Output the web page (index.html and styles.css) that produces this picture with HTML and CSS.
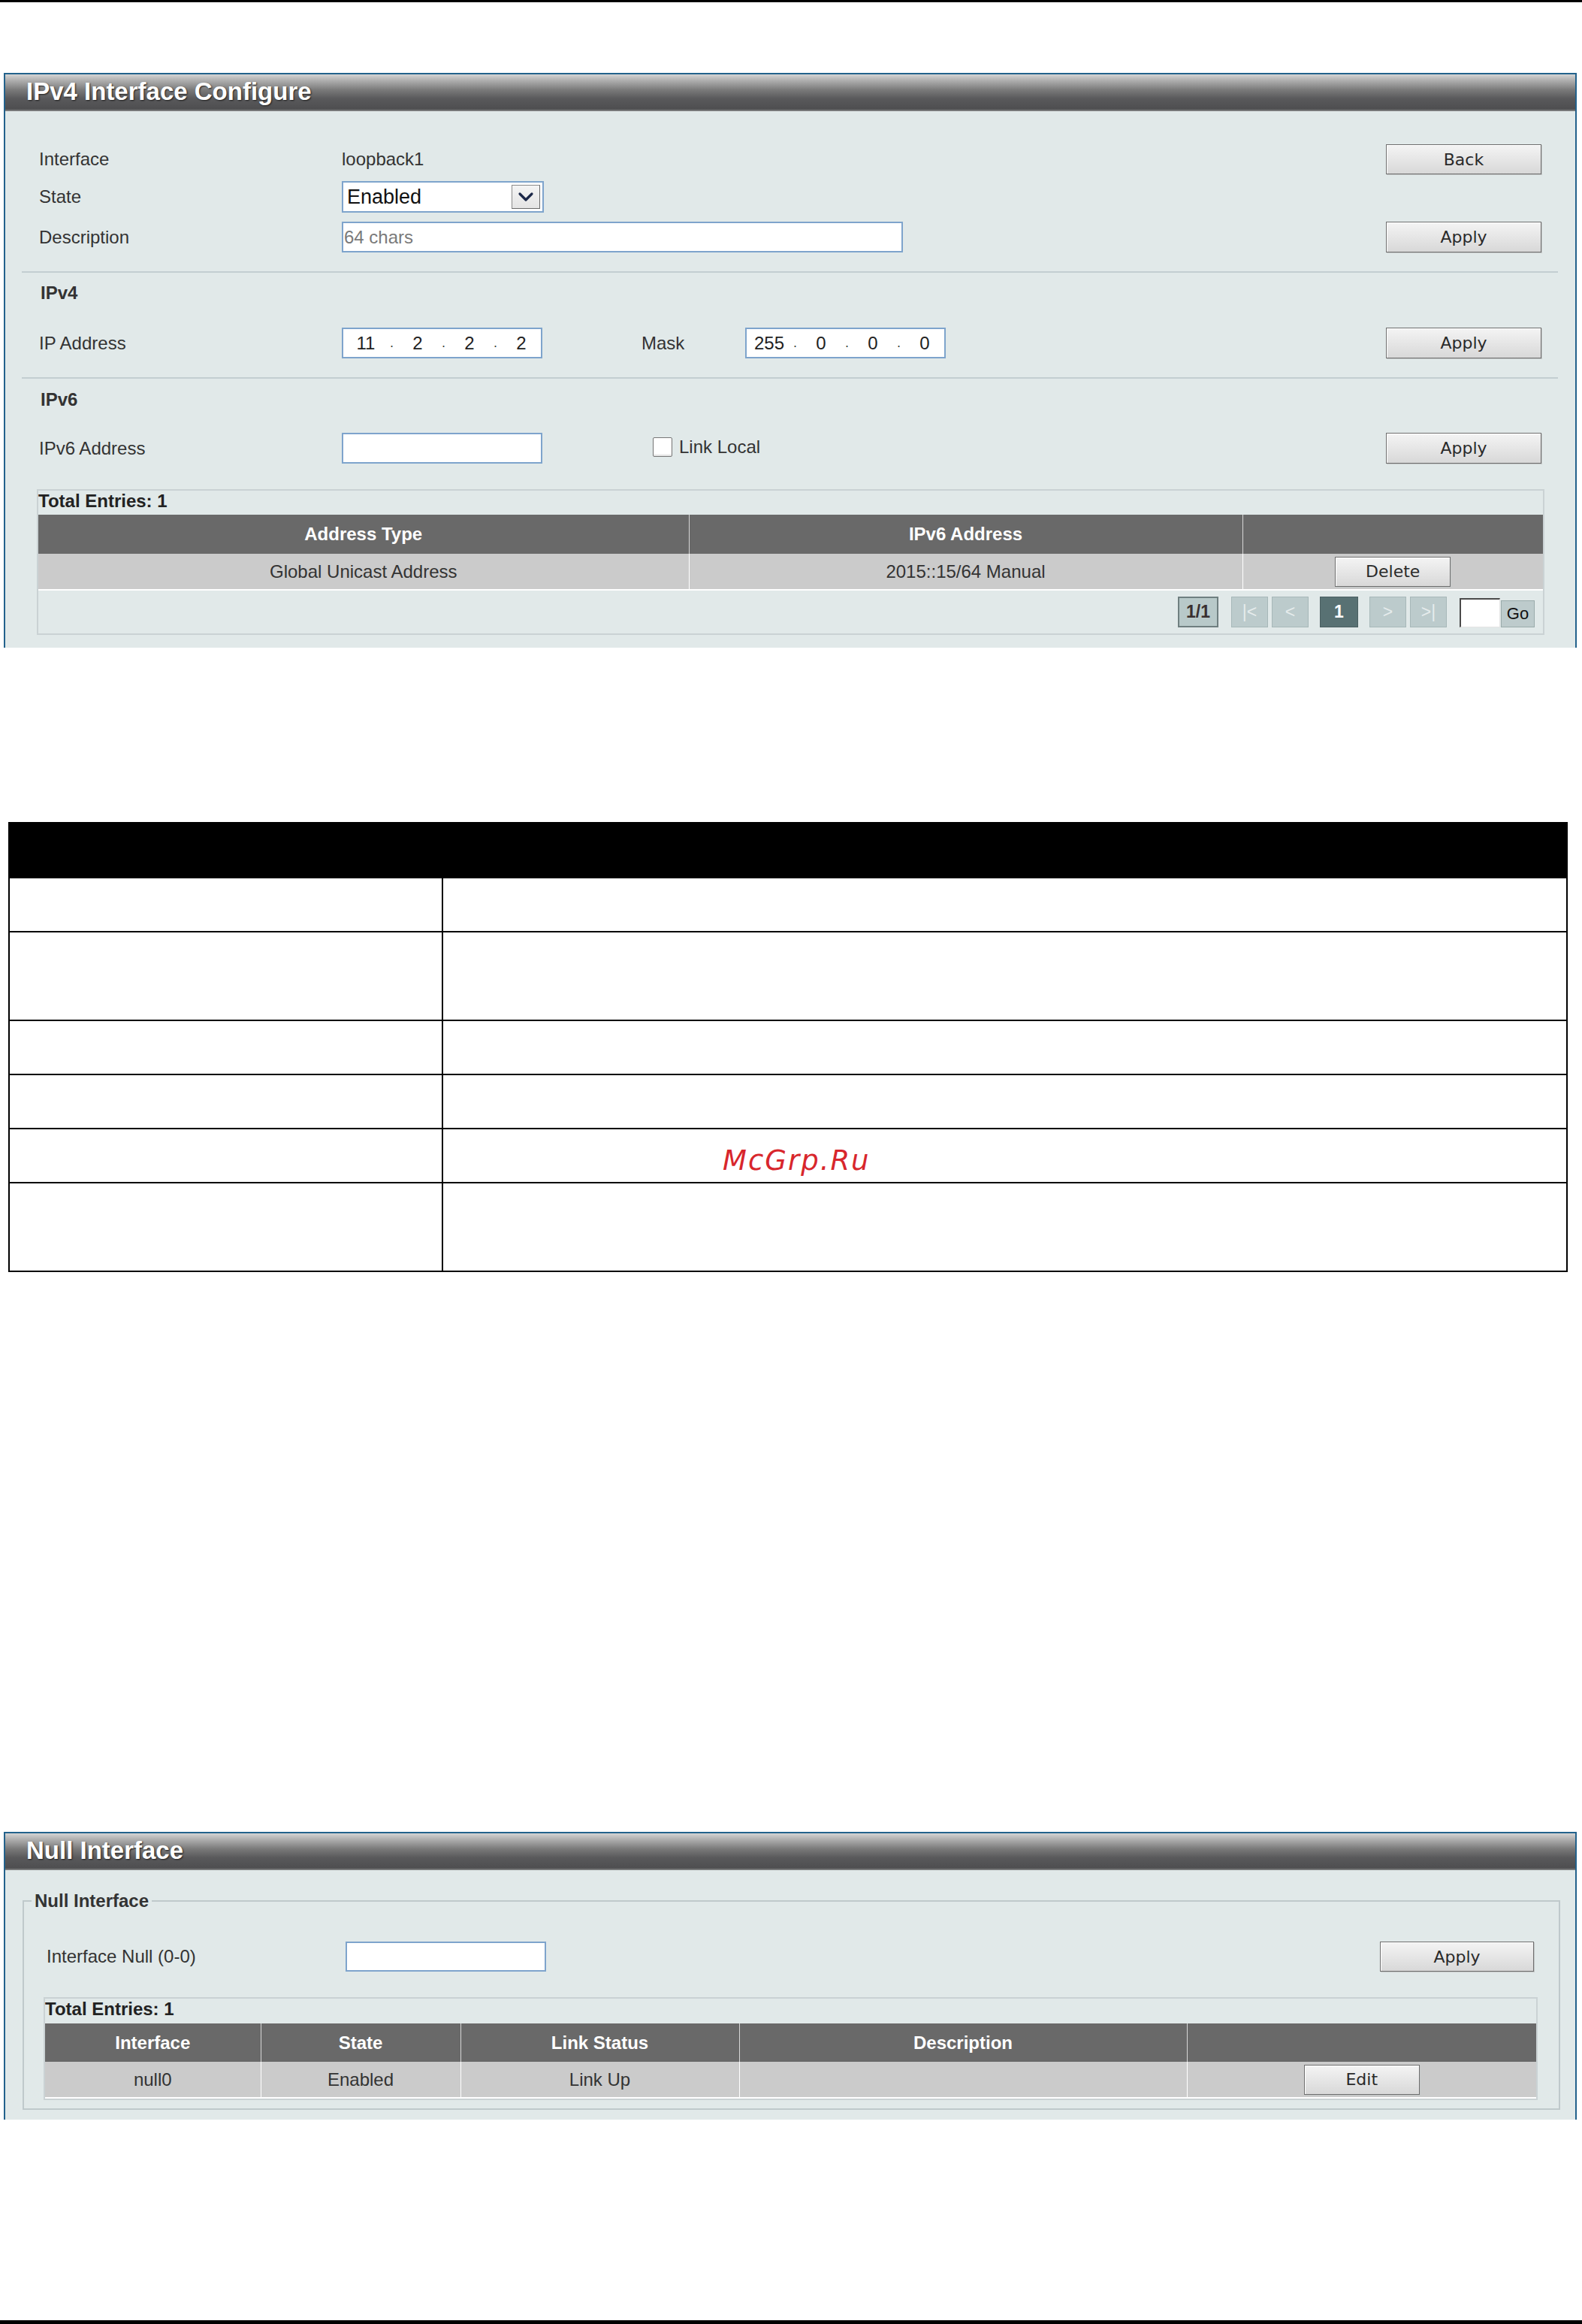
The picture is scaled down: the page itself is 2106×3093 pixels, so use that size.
FILE: index.html
```html
<!DOCTYPE html>
<html lang="en">
<head>
<meta charset="utf-8">
<title>IPv4 Interface Configure</title>
<link rel="stylesheet" href="styles.css">
</head>
<body>
<div class="topline"></div>

<section class="panel">
  <div class="ptitle">IPv4 Interface Configure</div>
  <div class="pbody">
    <div class="frow r1">
      <span class="lbl">Interface</span>
      <span class="val">loopback1</span>
      <button class="btn">Back</button>
    </div>
    <div class="frow r2">
      <span class="lbl">State</span>
      <div class="select">
        <span class="seltext">Enabled</span>
        <span class="arrow"><svg width="36" height="30" viewBox="0 0 36 30"><path d="M10 11 L18 19 L26 11" fill="none" stroke="#1b2748" stroke-width="3.2" stroke-linecap="round" stroke-linejoin="round"/></svg></span>
      </div>
    </div>
    <div class="frow r3">
      <span class="lbl">Description</span>
      <div class="inp desc">64 chars</div>
      <button class="btn">Apply</button>
    </div>
    <div class="sep"></div>
    <div class="subhead">IPv4</div>
    <div class="frow r4">
      <span class="lbl">IP Address</span>
      <div class="inp ip"><span class="oct">11</span><span class="dot">.</span><span class="oct">2</span><span class="dot">.</span><span class="oct">2</span><span class="dot">.</span><span class="oct">2</span></div>
      <span class="lbl2">Mask</span>
      <div class="inp ip"><span class="oct">255</span><span class="dot">.</span><span class="oct">0</span><span class="dot">.</span><span class="oct">0</span><span class="dot">.</span><span class="oct">0</span></div>
      <button class="btn">Apply</button>
    </div>
    <div class="sep sep2"></div>
    <div class="subhead sub2">IPv6</div>
    <div class="frow r5">
      <span class="lbl">IPv6 Address</span>
      <div class="inp ip6"></div>
      <span class="chk"><span class="cbox"></span><span>Link Local</span></span>
      <button class="btn">Apply</button>
    </div>
    <div class="tbox">
      <div class="total">Total Entries: 1</div>
      <table class="dt">
        <colgroup><col class="a1"><col class="a2"><col></colgroup>
        <thead><tr><th>Address Type</th><th>IPv6 Address</th><th></th></tr></thead>
        <tbody><tr><td>Global Unicast Address</td><td>2015::15/64 Manual</td><td><button class="btn sbtn">Delete</button></td></tr></tbody>
      </table>
      <div class="pager">
        <span class="pg cur">1/1</span>
        <span class="pg dis g17">|&lt;</span>
        <span class="pg dis g5">&lt;</span>
        <span class="pg act g15">1</span>
        <span class="pg dis g15">&gt;</span>
        <span class="pg dis g5">&gt;|</span>
        <span class="pgin g17"></span>
        <span class="pg go">Go</span>
      </div>
    </div>
  </div>
</section>

<table class="bt">
  <colgroup><col class="bc1"><col></colgroup>
  <tr class="bh"><td></td><td></td></tr>
  <tr class="s"><td></td><td></td></tr>
  <tr class="t"><td></td><td></td></tr>
  <tr class="s"><td></td><td></td></tr>
  <tr class="s"><td></td><td></td></tr>
  <tr class="s"><td></td><td class="wmcell"><div class="wm">McGrp.Ru</div></td></tr>
  <tr class="t"><td></td><td></td></tr>
</table>

<section class="panel panel2">
  <div class="ptitle">Null Interface</div>
  <div class="pbody pbody2">
    <fieldset class="fs">
      <legend>Null Interface</legend>
      <div class="frow nrow">
        <span class="lbl nl">Interface Null (0-0)</span>
        <div class="inp nin"></div>
        <button class="btn nbtn">Apply</button>
      </div>
      <div class="tbox ntbox">
        <div class="total">Total Entries: 1</div>
        <table class="dt">
          <colgroup><col class="n1"><col class="n2"><col class="n3"><col class="n4"><col></colgroup>
          <thead><tr><th>Interface</th><th>State</th><th>Link Status</th><th>Description</th><th></th></tr></thead>
          <tbody><tr><td>null0</td><td>Enabled</td><td>Link Up</td><td></td><td><button class="btn sbtn">Edit</button></td></tr></tbody>
        </table>
      </div>
    </fieldset>
  </div>
</section>

<div class="botline"></div>
</body>
</html>
```

FILE: styles.css
```css
* { box-sizing: border-box; }
html, body { margin: 0; padding: 0; background: #fff; }
body {
  width: 2106px;
  height: 3093px;
  overflow: hidden;
  font-family: "Liberation Sans", Arial, sans-serif;
  font-size: 24px;
  color: #333;
}

.topline { height: 3px; background: #000; }
.botline { height: 5px; background: #000; margin-top: 267px; }

/* panels */
.panel {
  margin: 94px 0 0 5px;
  width: 2094px;
  border: 2px solid #23628c;
  border-bottom: 0;
  background: #e1e9e9;
}
.panel2 { margin-top: 745px; }
.ptitle {
  height: 49px;
  line-height: 45px;
  padding-left: 28px;
  font-size: 33px;
  font-weight: bold;
  color: #fff;
  text-shadow: 1px 1px 2px #1e1e1e;
  background: linear-gradient(#d4d4d4 0%, #b0b0b0 16%, #7a7a7a 42%, #59595b 66%, #4e4e50 94%, #8c8e8e 100%);
}
.pbody { padding: 44px 45px 17px; }

.frow { display: flex; align-items: center; }
.lbl { width: 403px; flex: none; }
.val { color: #333; }
.r1 { height: 40px; }
.r2 { height: 42px; margin-top: 9px; }
.r3 { height: 41px; margin-top: 12px; }
.r4 { height: 41px; margin-top: 26px; }
.r5 { height: 41px; margin-top: 24px; }

.btn {
  margin-left: auto;
  width: 207px;
  height: 41px;
  padding: 0;
  font-family: "DejaVu Sans", Tahoma, sans-serif;
  font-size: 22px;
  color: #2a2a2a;
  background: linear-gradient(#f4f4f4, #e6e6e6 50%, #d8d8d8);
  border: 1px solid #6e6e6e;
  box-shadow: inset 1px 1px 0 #fff, 1px 1px 0 #c4c8c8;
}
.r1 .btn { height: 40px; }

.select {
  width: 269px;
  height: 42px;
  border: 2px solid #7ea4cc;
  background: #fff;
  display: flex;
  align-items: center;
  padding: 0 3px 0 5px;
}
.seltext { font-size: 27px; color: #111; flex: 1; }
.arrow {
  width: 38px;
  height: 32px;
  display: flex;
  align-items: center;
  justify-content: center;
  background: linear-gradient(#f4f4f4, #e4e4e4);
  border: 1px solid #8a8a8a;
  border-right-color: #6a6a6a;
  border-bottom-color: #6a6a6a;
}

.inp {
  height: 41px;
  border: 2px solid #7ea4cc;
  background: #fff;
}
.desc {
  width: 747px;
  color: #7a7a7a;
  line-height: 37px;
  padding-left: 1px;
}
.ip {
  width: 267px;
  display: flex;
  align-items: center;
  overflow: visible;
}
.oct { width: 60px; flex: none; text-align: center; color: #222; }
.dot { width: 9px; flex: none; text-align: center; font-size: 18px; color: #444; }
.lbl2 { margin-left: 132px; width: 138px; flex: none; }
.ip6 { width: 267px; }

.chk { display: flex; align-items: center; margin-left: 147px; margin-top: -4px; }
.cbox {
  width: 26px;
  height: 26px;
  margin-right: 9px;
  background: #fff;
  border: 1px solid #777;
  border-radius: 2px;
  box-shadow: inset 0 -2px 2px #e2e2e2;
}

.sep {
  height: 2px;
  background: #c3ced1;
  margin: 25px -22px 0 -23px;
}
.subhead {
  height: 40px;
  line-height: 40px;
  margin-top: 7px;
  padding-left: 2px;
  font-weight: bold;
  color: #333;
}
.sub2 { margin-top: 8px; }

/* data table box */
.tbox {
  margin: 34px -4px 0 -3px;
  border: 2px solid #cad2d4;
}
.total {
  height: 32px;
  line-height: 28px;
  font-weight: bold;
  color: #222;
}
.dt {
  width: 100%;
  border-collapse: collapse;
  table-layout: fixed;
}
.dt th {
  height: 52px;
  padding: 0;
  background: #696969;
  color: #fff;
  font-weight: bold;
  text-align: center;
}
.dt th + th { border-left: 1px solid #d6d6d6; }
.dt td {
  height: 48px;
  padding: 0;
  background: #cbcbcb;
  color: #333;
  text-align: center;
  border-bottom: 2px solid #fff;
}
.dt td + td { border-left: 1px solid #fff; }
.a1 { width: 866px; }
.a2 { width: 737px; }
.sbtn {
  margin: 0;
  width: 154px;
  height: 40px;
  vertical-align: middle;
}

.pager {
  height: 57px;
  display: flex;
  justify-content: flex-end;
  align-items: flex-end;
  padding: 0 11px 8px 0;
}
.pg {
  height: 41px;
  display: flex;
  align-items: center;
  justify-content: center;
  font-size: 23px;
}
.cur {
  width: 54px;
  background: #b8c9c9;
  border: 2px solid #6f7f80;
  font-weight: bold;
  color: #3a3030;
}
.dis {
  width: 49px;
  background: #bccbcc;
  border: 1px solid #a7b8b9;
  color: #e6ecec;
}
.act {
  width: 51px;
  background: #587173;
  border: 1px solid #4a5f61;
  color: #fff;
  font-weight: bold;
}
.g5 { margin-left: 5px; }
.g15 { margin-left: 15px; }
.g17 { margin-left: 17px; }
.pgin {
  width: 54px;
  height: 39px;
  background: #fff;
  border-top: 2px solid #4a4a4a;
  border-left: 2px solid #4a4a4a;
  border-right: 1px solid #e4e4e4;
  border-bottom: 1px solid #e4e4e4;
}
.go {
  margin-left: 1px;
  width: 45px;
  height: 36px;
  background: #bdcbcc;
  border: 1px solid #9aabab;
  color: #111;
  font-size: 22px;
}

/* black table */
.bt {
  margin: 232px 0 0 11px;
  width: 2076px;
  border-collapse: collapse;
  table-layout: fixed;
}
.bt td { border: 2px solid #000; padding: 0; vertical-align: top; }
.bc1 { width: 577px; }
.bt .bh td { background: #000; height: 73px; }
.bt .s td { height: 72px; }
.bt .t td { height: 118px; }
.wm {
  padding: 20px 0 0 372px;
  line-height: 44px;
  font-family: "DejaVu Sans", sans-serif;
  font-style: italic;
  font-size: 37px;
  letter-spacing: 2px;
  color: #d8262c;
}

/* null interface panel */
.pbody2 { padding: 26px 20px 13px 23px; }
.fs {
  margin: 0;
  padding: 0;
  border: 2px solid #bfc9cb;
  min-width: 0;
}
.fs legend {
  margin-left: 10px;
  padding: 0 4px;
  line-height: 30px;
  font-weight: bold;
  color: #333;
}
.nrow { height: 40px; margin: 39px 33px 0 30px; }
.nl { width: 398px; }
.nin { width: 267px; height: 40px; }
.nbtn { width: 205px; height: 40px; }
.ntbox { margin: 34px 28px 11px 26px; }
.ntbox .total { height: 33px; line-height: 28px; }
.ntbox .dt th { height: 51px; }
.n1 { width: 287px; }
.n2 { width: 266px; }
.n3 { width: 371px; }
.n4 { width: 596px; }
```
